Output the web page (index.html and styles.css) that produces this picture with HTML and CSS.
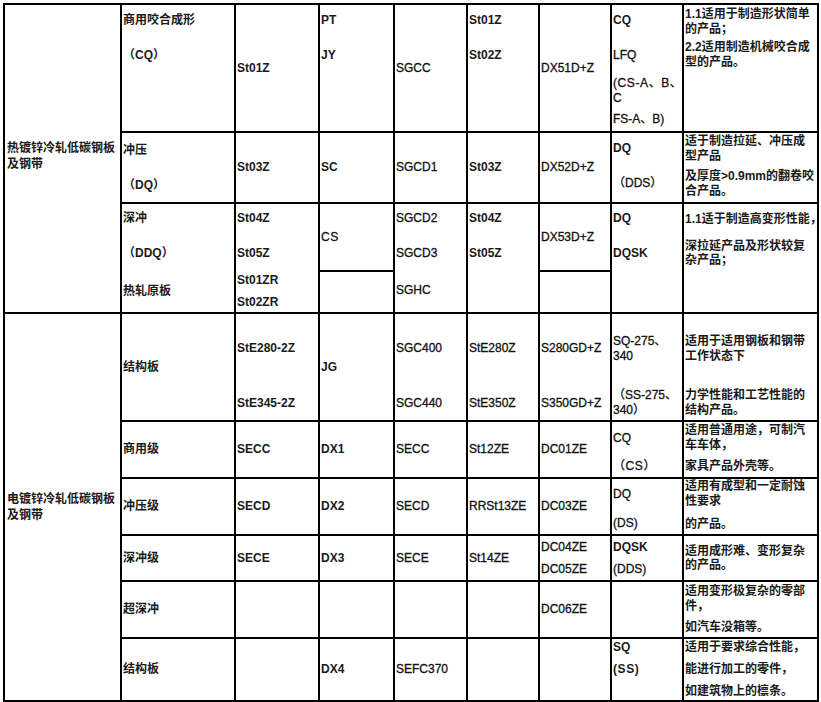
FILE: index.html
```html
<!DOCTYPE html>
<html lang="zh-CN">
<head>
<meta charset="utf-8">
<title>镀锌钢板牌号对照</title>
<link rel="stylesheet" href="styles.css">
</head>
<body>
<table class="spec">
<colgroup>
<col class="c1"><col class="c2"><col class="c3"><col class="c4"><col class="c5"><col class="c6"><col class="c7"><col class="c8"><col class="c9">
</colgroup>
<tbody>
<tr class="h128">
<td rowspan="4" class="cat cat-hot">热镀锌冷轧低碳钢板<br>及钢带</td>
<td class="t"><p class="mt8">商用咬合成形</p><p class="mt20">（CQ）</p></td>
<td>St01Z</td>
<td class="t"><p class="mt8">PT</p><p class="mt20">JY</p></td>
<td class="n">SGCC</td>
<td class="t"><p class="mt8">St01Z</p><p class="mt20">St02Z</p></td>
<td class="n">DX51D+Z</td>
<td class="t"><p class="mt8">CQ</p><p class="mt20 n">LFQ</p><p class="mt14 n wide">(CS-A、B、<br>C</p><p class="mt7 n">FS-A、B)</p></td>
<td class="t use"><p class="mt2">1.1适用于制造形状简单<br>的产品；</p><p class="mt4">2.2适用制造机械咬合成<br>型的产品。</p></td>
</tr>
<tr class="h71">
<td class="t"><p class="mt10">冲压</p><p class="mt20">（DQ）</p></td>
<td>St03Z</td>
<td>SC</td>
<td class="n">SGCD1</td>
<td>St03Z</td>
<td class="n">DX52D+Z</td>
<td class="t"><p class="mt8">DQ</p><p class="mt20 n">（DDS）</p></td>
<td class="t use"><p class="mt1">适于制造拉延、冲压成<br>型产品</p><p class="mt6">及厚度&gt;0.9mm的翻卷咬<br>合产品。</p></td>
</tr>
<tr class="h68">
<td rowspan="2" class="t"><p class="mt7">深冲</p><p class="mt20">（DDQ）</p><p class="mt24">热轧原板</p></td>
<td rowspan="2" class="t"><p class="mt7">St04Z</p><p class="mt20">St05Z</p><p class="mt13">St01ZR</p><p class="mt7">St02ZR</p></td>
<td class="n wide">CS</td>
<td rowspan="2" class="t n"><p class="mt7">SGCD2</p><p class="mt20">SGCD3</p><p class="mt23">SGHC</p></td>
<td rowspan="2" class="t"><p class="mt7">St04Z</p><p class="mt20">St05Z</p></td>
<td class="n">DX53D+Z</td>
<td rowspan="2" class="t"><p class="mt7">DQ</p><p class="mt20">DQSK</p></td>
<td rowspan="2" class="t use"><p class="mt8">1.1适于制造高变形性能，</p><p class="mt12">深拉延产品及形状较复<br>杂产品；</p></td>
</tr>
<tr class="h42"><td></td><td></td></tr>
<tr class="h108">
<td rowspan="6" class="cat">电镀锌冷轧低碳钢板<br>及钢带</td>
<td>结构板</td>
<td class="t"><p class="mt27">StE280-2Z</p><p class="mt40">StE345-2Z</p></td>
<td>JG</td>
<td class="t n"><p class="mt27">SGC400</p><p class="mt40">SGC440</p></td>
<td class="t n"><p class="mt27">StE280Z</p><p class="mt40">StE350Z</p></td>
<td class="t n"><p class="mt27">S280GD+Z</p><p class="mt40">S350GD+Z</p></td>
<td class="t n"><p class="mt20">SQ-275、<br>340</p><p class="mt25">（SS-275、<br>340）</p></td>
<td class="t use"><p class="mt20">适用于适用钢板和钢带<br>工作状态下</p><p class="mt25">力学性能和工艺性能的<br>结构产品。</p></td>
</tr>
<tr class="h57">
<td>商用级</td>
<td>SECC</td>
<td>DX1</td>
<td class="n">SECC</td>
<td class="n">St12ZE</td>
<td class="n">DC01ZE</td>
<td class="t"><p class="mt9 n">CQ</p><p class="mt13 n wide">（CS）</p></td>
<td class="t use"><p class="mt1">适用普通用途，可制汽<br>车车体，</p><p class="mt7">家具产品外壳等。</p></td>
</tr>
<tr class="h57">
<td>冲压级</td>
<td>SECD</td>
<td>DX2</td>
<td class="n">SECD</td>
<td class="n">RRSt13ZE</td>
<td class="n">DC03ZE</td>
<td class="t"><p class="mt8 n">DQ</p><p class="mt14 n">(DS)</p></td>
<td class="t use"><p class="mt0">适用有成型和一定耐蚀<br>性要求</p><p class="mt9">的产品。</p></td>
</tr>
<tr class="h43">
<td>深冲级</td>
<td>SECE</td>
<td>DX3</td>
<td class="n">SECE</td>
<td class="n">St14ZE</td>
<td class="n"><p class="lh22">DC04ZE</p><p class="lh22">DC05ZE</p></td>
<td><p class="lh22">DQSK</p><p class="lh22 n">(DDS)</p></td>
<td class="use">适用成形难、变形复杂<br>的产品。</td>
</tr>
<tr class="h57">
<td>超深冲</td>
<td></td>
<td></td>
<td></td>
<td></td>
<td class="n">DC06ZE</td>
<td></td>
<td class="t use"><p class="mt2">适用变形极复杂的零部<br>件，</p><p class="mt7">如汽车没箱等。</p></td>
</tr>
<tr class="h63">
<td>结构板</td>
<td></td>
<td>DX4</td>
<td class="n">SEFC370</td>
<td></td>
<td></td>
<td class="t"><p class="mt1">SQ</p><p class="mt7 wide">(SS)</p></td>
<td class="t use"><p class="mt1">适用于要求综合性能，</p><p class="mt7">能进行加工的零件，</p><p class="mt8">如建筑物上的檩条。</p></td>
</tr>
</tbody>
</table>
</body>
</html>
```
FILE: styles.css
```css
html, body {
  margin: 0;
  padding: 0;
  background: #ffffff;
}

.spec {
  border-collapse: collapse;
  table-layout: fixed;
  width: 814px;
  margin: 3px 0 0 3px;
  font-family: "Liberation Sans", "Noto Sans CJK SC", sans-serif;
  font-size: 12px;
  font-weight: bold;
  color: #1a1a1a;
}

.c1 { width: 117px; }
.c2 { width: 114px; }
.c3 { width: 84px; }
.c4 { width: 75px; }
.c5 { width: 73px; }
.c6 { width: 72px; }
.c7 { width: 72px; }
.c8 { width: 72px; }
.c9 { width: 135px; }

.h128 { height: 128px; }
.h71 { height: 71px; }
.h68 { height: 68px; }
.h42 { height: 42px; }
.h108 { height: 108px; }
.h57 { height: 57px; }
.h43 { height: 43px; }
.h63 { height: 63px; }

.spec td {
  border: 2px solid #000;
  padding: 0 0 0 1px;
  vertical-align: middle;
  white-space: nowrap;
  overflow: visible;
  line-height: 14.5px;
  text-align: left;
}

.spec td.t { vertical-align: top; }

.spec .n {
  font-weight: normal;
  color: #111;
  -webkit-text-stroke: 0.3px #111;
}

.spec .wide { letter-spacing: 0.6px; }

.spec p {
  margin: 0;
  line-height: 14.5px;
}

.spec p.lh22 { line-height: 22px; }

.spec td.cat {
  line-height: 16px;
  padding-left: 2px;
}

.spec td.cat-hot { padding-bottom: 5px; }

.spec td.use { padding-right: 2px; }

.mt0 { margin-top: 0; }
.spec .mt1 { margin-top: 1px; }
.spec .mt2 { margin-top: 2px; }
.spec .mt4 { margin-top: 4px; }
.spec .mt6 { margin-top: 6px; }
.spec .mt7 { margin-top: 7px; }
.spec .mt8 { margin-top: 8px; }
.spec .mt9 { margin-top: 9px; }
.spec .mt10 { margin-top: 10px; }
.spec .mt12 { margin-top: 12px; }
.spec .mt13 { margin-top: 13px; }
.spec .mt14 { margin-top: 14px; }
.spec .mt20 { margin-top: 20px; }
.spec .mt23 { margin-top: 23px; }
.spec .mt24 { margin-top: 24px; }
.spec .mt25 { margin-top: 25px; }
.spec .mt27 { margin-top: 27px; }
.spec .mt40 { margin-top: 40px; }
```
